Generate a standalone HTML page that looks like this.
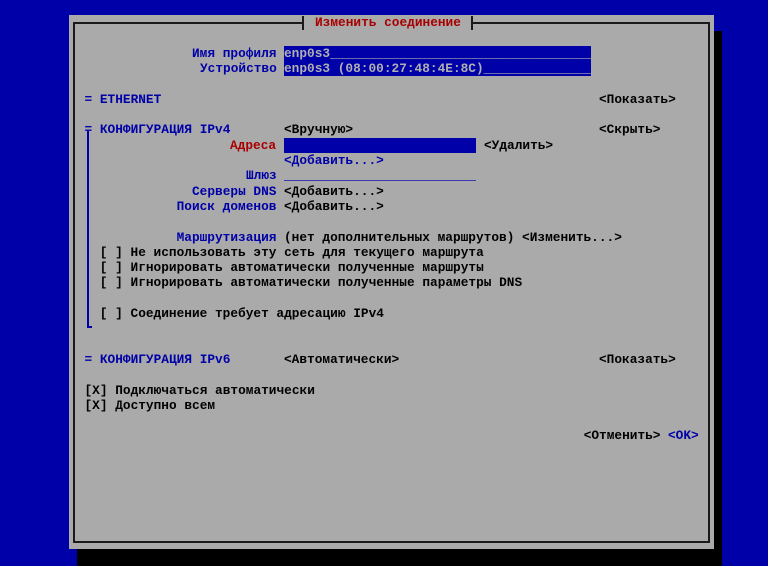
<!DOCTYPE html>
<html><head><meta charset="utf-8"><style>
html,body{margin:0;padding:0}
body{width:768px;height:566px;background:#0000a8;position:relative;overflow:hidden;font-family:"Liberation Mono","DejaVu Sans Mono",monospace;font-size:12.8px;font-weight:bold}
.r{position:absolute;white-space:pre;line-height:15.3px;height:15.3px}
.b{color:#0000a8}.k{color:#000}.d{color:#a80000}
.f{background:#0000a8;color:#b0b0b0;overflow:hidden}
.ln{position:absolute;background:#1a1a1a}
</style></head><body>
<div style="position:absolute;left:69px;top:15px;width:645px;height:534px;background:#aaaaaa"></div>
<div style="position:absolute;left:714px;top:31px;width:8px;height:535px;background:#000"></div>
<div style="position:absolute;left:77px;top:549px;width:645px;height:17px;background:#000"></div>
<!-- border -->
<div class="ln" style="left:73px;top:22px;width:2px;height:520px"></div>
<div class="ln" style="left:708px;top:22px;width:2px;height:520px"></div>
<div class="ln" style="left:73px;top:541px;width:637px;height:2px"></div>
<div class="ln" style="left:73px;top:22px;width:231px;height:2px"></div>
<div class="ln" style="left:471px;top:22px;width:239px;height:2px"></div>
<div class="ln" style="left:302px;top:16px;width:2px;height:14px"></div>
<div class="ln" style="left:471px;top:16px;width:2px;height:14px"></div>
<div class="r d" style="left:315px;top:15px">Изменить соединение</div>

<div class="r b" style="left:192px;top:45.9px">Имя профиля</div>
<div class="r f" style="left:284px;top:45.9px;width:307px">enp0s3__________________________________</div>
<div class="r b" style="left:200px;top:61.2px">Устройство</div>
<div class="r f" style="left:284px;top:61.2px;width:307px">enp0s3 (08:00:27:48:4E:8C)______________</div>

<div class="r b" style="left:84.5px;top:91.8px">= ETHERNET</div>
<div class="r k" style="left:599px;top:91.8px">&lt;Показать&gt;</div>

<div class="r b" style="left:84.5px;top:122.4px">= КОНФИГУРАЦИЯ IPv4</div>
<div class="r k" style="left:284px;top:122.4px">&lt;Вручную&gt;</div>
<div class="r k" style="left:599px;top:122.4px">&lt;Скрыть&gt;</div>
<div style="position:absolute;left:87px;top:131px;width:2px;height:197px;background:#0000a8"></div>
<div style="position:absolute;left:87px;top:326px;width:5px;height:2px;background:#0000a8"></div>
<div class="r d" style="left:230px;top:137.7px">Адреса</div>
<div class="r f" style="left:284px;top:137.7px;width:192px"> </div>
<div class="r k" style="left:484px;top:137.7px">&lt;Удалить&gt;</div>
<div class="r b" style="left:284px;top:153px">&lt;Добавить...&gt;</div>
<div class="r b" style="left:246px;top:168.3px">Шлюз</div>
<div style="position:absolute;left:284px;top:180px;width:192px;height:1px;background:#3a3ab0"></div>
<div class="r b" style="left:192px;top:183.6px">Серверы DNS</div>
<div class="r k" style="left:284px;top:183.6px">&lt;Добавить...&gt;</div>
<div class="r b" style="left:176.6px;top:198.9px">Поиск доменов</div>
<div class="r k" style="left:284px;top:198.9px">&lt;Добавить...&gt;</div>
<div class="r b" style="left:176.6px;top:229.5px">Маршрутизация</div>
<div class="r k" style="left:284px;top:229.5px">(нет дополнительных маршрутов) &lt;Изменить...&gt;</div>
<div class="r k" style="left:99.8px;top:244.8px">[ ] Не использовать эту сеть для текущего маршрута</div>
<div class="r k" style="left:99.8px;top:260.1px">[ ] Игнорировать автоматически полученные маршруты</div>
<div class="r k" style="left:99.8px;top:275.4px">[ ] Игнорировать автоматически полученные параметры DNS</div>
<div class="r k" style="left:99.8px;top:306px">[ ] Соединение требует адресацию IPv4</div>

<div class="r b" style="left:84.5px;top:351.9px">= КОНФИГУРАЦИЯ IPv6</div>
<div class="r k" style="left:284px;top:351.9px">&lt;Автоматически&gt;</div>
<div class="r k" style="left:599px;top:351.9px">&lt;Показать&gt;</div>
<div class="r k" style="left:84.5px;top:382.5px">[X] Подключаться автоматически</div>
<div class="r k" style="left:84.5px;top:397.8px">[X] Доступно всем</div>
<div class="r k" style="left:583.7px;top:428.4px">&lt;Отменить&gt;</div>
<div class="r b" style="left:668px;top:428.4px">&lt;OK&gt;</div>
</body></html>
